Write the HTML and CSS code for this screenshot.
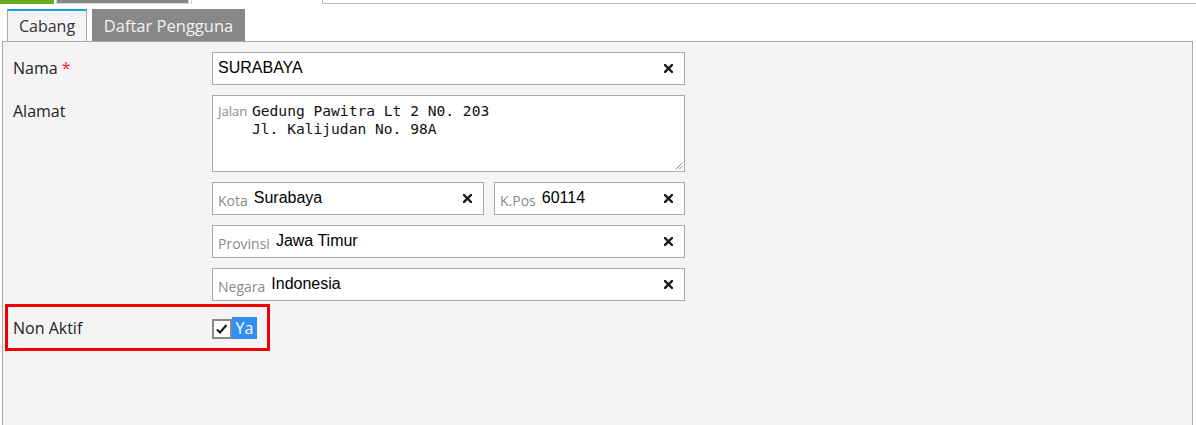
FILE: index.html
```html
<!DOCTYPE html>
<html>
<head>
<meta charset="utf-8">
<link rel="stylesheet" href="styles.css">
</head>
<body>
<div class="topstrip">
  <div class="bar-green"></div>
  <div class="bar-gray"></div>
  <div class="bar-line"></div>
  <div class="bar-box"></div>
</div>
<div class="tabs">
  <div class="tab tab-active">Cabang</div>
  <div class="tab tab-idle">Daftar Pengguna</div>
</div>
<div class="panel">
  <div class="form">
    <div class="row">
      <div class="label">Nama <span class="req">*</span></div>
      <div class="input w-full">
        <span class="val">SURABAYA</span>
        <svg class="clear" width="9" height="9" viewBox="0 0 9 9"><path d="M1 1L8 8M8 1L1 8" stroke="#1a1a1a" stroke-width="2.4" stroke-linecap="square"/></svg>
      </div>
    </div>
    <div class="row">
      <div class="label">Alamat</div>
      <div class="fieldcol">
        <div class="textarea">
          <span class="pfx-sm">Jalan</span>
          <div class="mono">Gedung Pawitra Lt 2 N0. 203
Jl. Kalijudan No. 98A</div>
          <svg class="grip" width="9" height="9" viewBox="0 0 9 9"><path d="M8.5 1.5L1.5 8.5M8.5 5L5 8.5" stroke="#888" stroke-width="1"/></svg>
        </div>
        <div class="pair">
          <div class="input w-kota">
            <span class="pfx">Kota</span><span class="val">Surabaya</span>
            <svg class="clear" width="9" height="9" viewBox="0 0 9 9"><path d="M1 1L8 8M8 1L1 8" stroke="#1a1a1a" stroke-width="2.4" stroke-linecap="square"/></svg>
          </div>
          <div class="input w-pos">
            <span class="pfx">K.Pos</span><span class="val">60114</span>
            <svg class="clear" width="9" height="9" viewBox="0 0 9 9"><path d="M1 1L8 8M8 1L1 8" stroke="#1a1a1a" stroke-width="2.4" stroke-linecap="square"/></svg>
          </div>
        </div>
        <div class="input w-full">
          <span class="pfx">Provinsi</span><span class="val">Jawa Timur</span>
          <svg class="clear" width="9" height="9" viewBox="0 0 9 9"><path d="M1 1L8 8M8 1L1 8" stroke="#1a1a1a" stroke-width="2.4" stroke-linecap="square"/></svg>
        </div>
        <div class="input w-full">
          <span class="pfx">Negara</span><span class="val">Indonesia</span>
          <svg class="clear" width="9" height="9" viewBox="0 0 9 9"><path d="M1 1L8 8M8 1L1 8" stroke="#1a1a1a" stroke-width="2.4" stroke-linecap="square"/></svg>
        </div>
      </div>
    </div>
    <div class="flagrow">
      <div class="label label-flag">Non Aktif</div>
      <div class="check">
        <svg width="16" height="16" viewBox="0 0 16 16"><path d="M3 8.5L6 11.5L12.5 4" fill="none" stroke="#111" stroke-width="2"/></svg>
      </div>
      <div class="ya">Ya</div>
    </div>
  </div>
</div>
</body>
</html>
```

FILE: styles.css
```css
* { box-sizing: border-box; }
html, body { margin: 0; padding: 0; background: #fff; }
body { font-family: "Open Sans", "Liberation Sans", sans-serif; color: #333; overflow: hidden; }

.topstrip { display: flex; height: 4px; }
.bar-green { width: 54px; background: #6aaa1e; }
.bar-gray { width: 133px; margin-left: 2px; background: #888; border: 1px solid #d4d4d4; border-top: none; }
.bar-line { width: 1px; margin-left: 2px; background: #ccc; }
.bar-box { flex: 1; margin-left: 130px; border-left: 1px solid #bbb; border-bottom: 1px solid #bbb; }

.tabs { display: flex; gap: 5px; margin-top: 5px; padding-left: 7px; height: 32px; }
.tab { height: 32px; font-size: 16px; display: flex; align-items: center; justify-content: center; }
.tab-active { width: 80px; background: #f4f4f4; border-top: 2px solid #1aa0e4; border-left: 1px solid #aaa; border-right: 1px solid #aaa; color: #333; }
.tab-idle { width: 153px; background: #888; color: #f2f2f2; font-size: 16.5px; }

.panel { margin: 0 3px 0 2px; height: 400px; background: #f4f4f4; border: 1px solid #aaa; }
.form { padding: 10px 0 0 2px; }

.row { display: flex; margin-bottom: 10px; }
.label { width: 207px; padding-left: 8px; font-size: 16px; line-height: 33px; color: #222; flex: none; }
.req { color: #e8202a; }

.fieldcol { display: flex; flex-direction: column; gap: 10px; width: 473px; }
.pair { display: flex; gap: 10px; }

.input { height: 33px; background: #fff; border: 1px solid #aaa; display: flex; align-items: center; padding: 0 11px 1px 5px; }
.w-full { width: 473px; }
.w-kota { width: 272px; }
.w-pos { width: 191px; }
.pfx { font-family: "Open Sans", sans-serif; font-size: 14px; color: #8a8a8a; margin-right: 6px; position: relative; top: 2px; }
.val { font-family: "Liberation Sans", Arial, sans-serif; font-size: 16px; color: #000; }
.clear { margin-left: auto; flex: none; }

.textarea { position: relative; height: 77px; background: #fff; border: 1px solid #aaa; padding: 6px 5px; display: flex; align-items: baseline; }
.pfx-sm { width: 34px; flex: none; font-family: "Open Sans", sans-serif; font-size: 13px; line-height: 18px; color: #8a8a8a; }
.mono { white-space: pre; font-family: "DejaVu Sans Mono", monospace; font-size: 14.6px; line-height: 18px; color: #111; }
.grip { position: absolute; right: 1px; bottom: 1px; }

.flagrow { display: flex; align-items: center; width: 265px; height: 47px; margin-top: -7px; border: 3px solid #f20000; }
.label-flag { width: 204px; padding-left: 5px; line-height: 22px; }
.check { width: 20px; height: 20px; border: 2px solid #888; background: #fff; display: flex; align-items: center; justify-content: center; margin-top: 2px; }
.ya { height: 22px; width: 25px; background: #3390f0; color: #fff; font-size: 16px; line-height: 22px; text-align: center; }
```
